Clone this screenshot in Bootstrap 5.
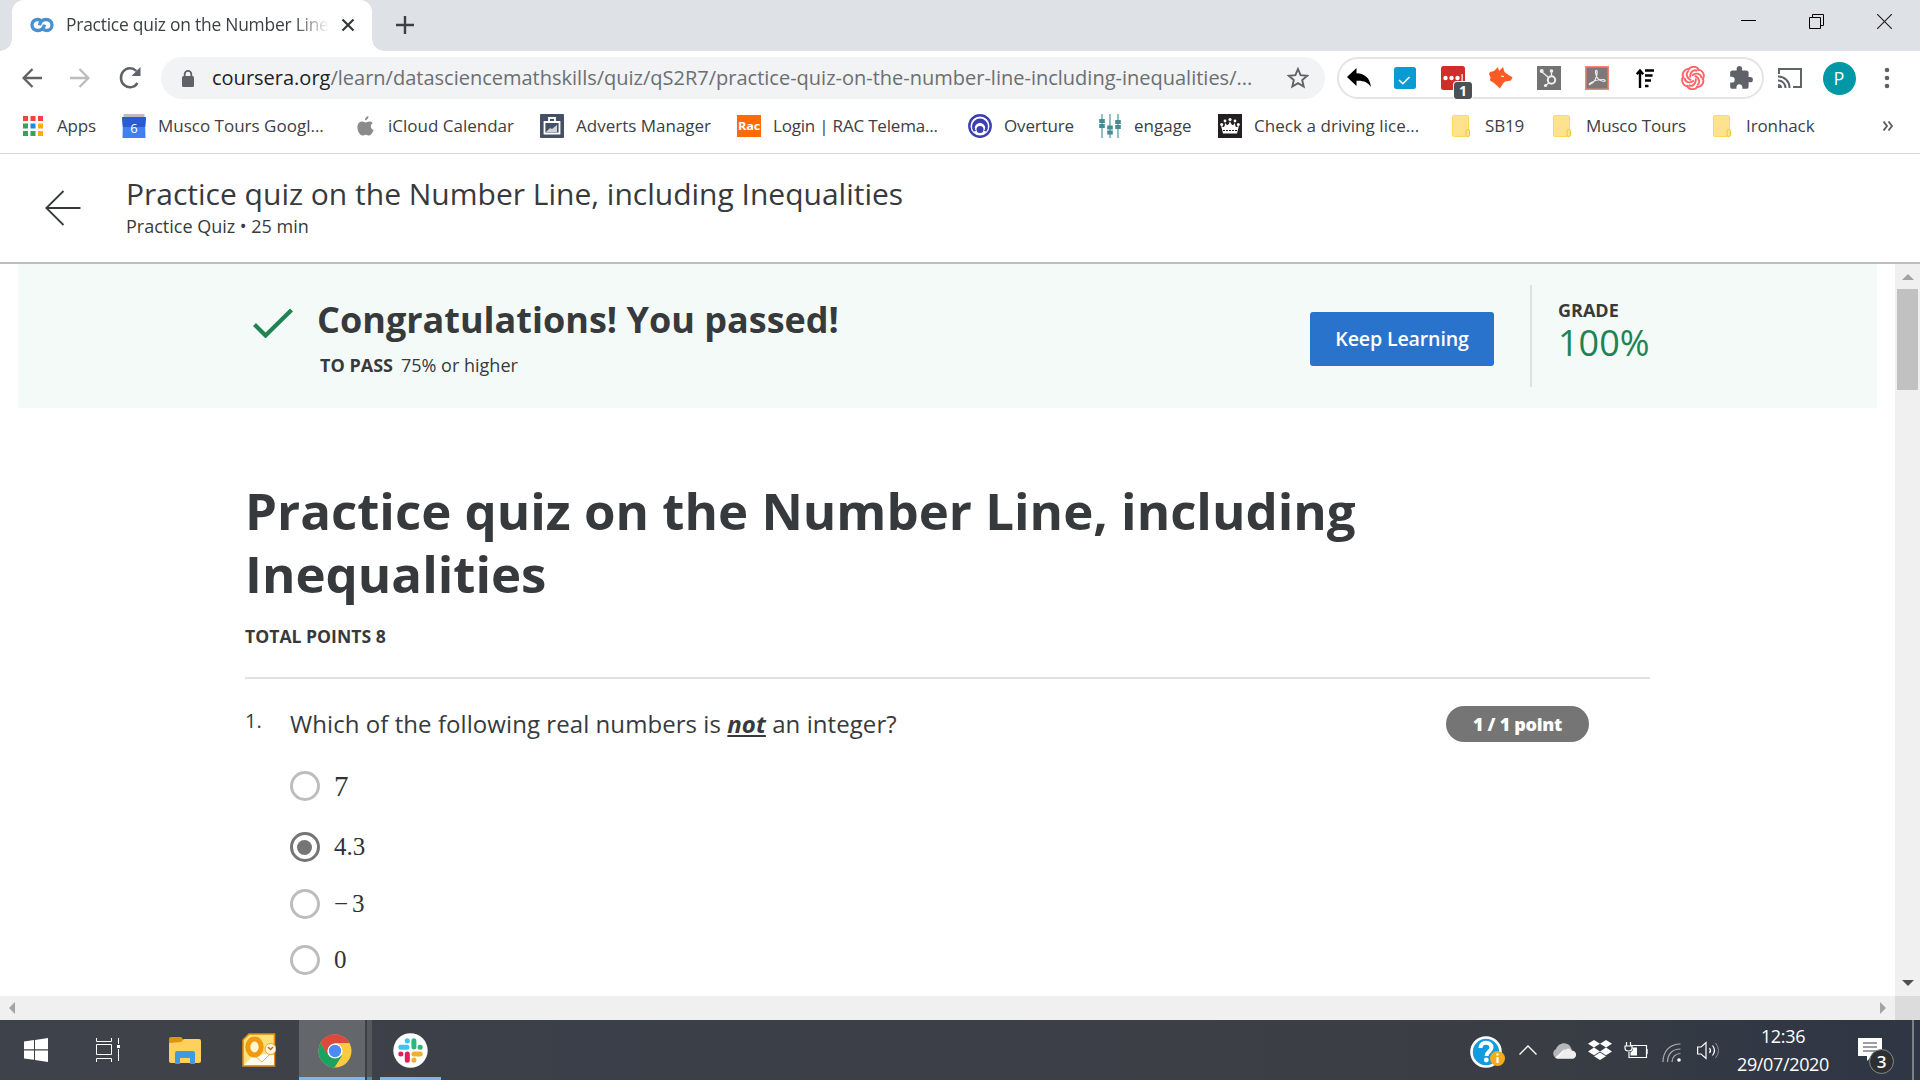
<!DOCTYPE html>
<html lang="en">
<head>
<meta charset="utf-8">
<title>Practice quiz on the Number Line</title>
<link href="https://cdn.jsdelivr.net/npm/bootstrap@5.3.0/dist/css/bootstrap.min.css" rel="stylesheet">
<style>
body{width:1920px;height:1080px;overflow:hidden;font-family:"Open Sans","Noto Sans",sans-serif;color:#373a3c;background:#fff}
svg{display:block;flex:none}
.ic{flex:none;display:flex;align-items:center;justify-content:center}
/* browser chrome */
.tabstrip{height:51px;background:#dee1e6}
.tabitem{width:360px;height:51px;margin-left:12px;background:#fff;border-radius:12px 12px 0 0;padding:0 0 2px 18px;position:relative}
.tabitem::before,.tabitem::after{content:"";position:absolute;bottom:0;width:12px;height:12px}
.tabitem::before{left:-12px;background:radial-gradient(circle at 0 0,transparent 11.5px,#fff 12px)}
.tabitem::after{right:-12px;background:radial-gradient(circle at 100% 0,transparent 11.5px,#fff 12px)}
.tabtitle{width:263px;margin:0 4px 0 12px;font-size:17.4px;letter-spacing:-.22px;color:#3c4043;-webkit-mask-image:linear-gradient(90deg,#000 87%,transparent 100%)}
.newtab{width:66px;height:50px}
.winctl{margin-right:2px}
.winctl .ic{width:68px;height:42px}
.toolbar{height:54px}
.omni{width:1164px;height:42px;margin:0 0 0 9px;border-radius:21px;background:#f1f3f4;padding-left:21px}
.url{font-size:20px;color:#6b6f73;margin-left:18px;width:1075px}
.url b{font-weight:400;color:#202124}
.exts{width:427px;height:42px;margin:0 0 0 12px;border:2px solid #e2e4e6;border-radius:21px}
.exts .ic{width:48px}
.exts .ic:first-child{width:40px;margin-right:2px}
.navbtn{width:48px;height:54px}
.count{left:25px;top:23px;width:18px;height:17px;background:#4d5154;border-radius:3px;font-size:14px;line-height:17px;box-shadow:0 0 0 1px #fff}
.avatar{width:33px;height:33px;background:#0097a7;color:#fff;font-size:18px}
.bookbar{height:49px;border-bottom:1px solid #d6d8da;font-size:17px;color:#3c4043}
.bm{flex:none;height:42px;display:flex;align-items:center}
.bm .ic{width:24px;margin-right:12px}
.b0{width:101px;margin-left:21px;letter-spacing:-.2px}.b1{width:231px}.b2{width:187px}.b3{width:197px}.b4{width:231px;letter-spacing:-.2px}.b5{width:130px;letter-spacing:-.15px}.b6{width:120px}.b7{width:231px;letter-spacing:.05px}.b8{width:101px;letter-spacing:-.15px}.b9{width:160px;letter-spacing:-.15px}.b10{width:161px;letter-spacing:-.1px}
.b2 .ic{margin-right:11px}
/* quiz page */
.pagehead{height:110px;border-bottom:2px solid #bdbdbd;padding:20px 0 0 44px}
.pagehead .titles{margin-left:44px}
.ttl{font-size:30px;line-height:40px}
.sub{font-size:18px;line-height:24px}
.view{height:732px}
.pane{width:1895px}
.banner{width:1859px;height:144px;margin-left:18px;background:#f4faf8;padding-left:235px}
.tick{margin-top:44px}
.result{width:1017px;padding:32px 0 0 24px}
.passline{margin:9px 0 0 3px}
.congrats{font-size:36px;line-height:48px;font-weight:700}
.gradebox{height:102px;border-left:2px solid #e1e1e1;padding:13px 0 0 26px;margin:21px 0 0 36px}
.gradeval{font-size:36px;line-height:42px;color:#1f8354}
.keep{width:184px;height:54px;background:#2a73cc;color:#fff;border:0;border-radius:3px;font-size:19.6px;font-weight:600;letter-spacing:-.15px;margin-top:48px;padding:0}
.keep:hover{background:#2a73cc;color:#fff}
.quiz{width:1405px;margin:71px 0 0 245px}
.quiz h1{font-size:51px;line-height:63px;font-weight:700;margin:0}
.total{font-size:17.6px;line-height:24px;font-weight:700;margin-top:19px}
.rule{height:2px;background:#e1e1e1;margin-top:29px}
.qrow{margin-top:29px}
.qnum{width:45px;font-size:20px;line-height:26px}
.qtext{font-size:24px;line-height:32px;letter-spacing:.065px}
.points{width:143px;height:36px;background:#757575;color:#fff;border-radius:18px;font-size:18px;line-height:37px;font-weight:800;letter-spacing:-.3px;margin:-2px 61px 0 auto}
.answers{margin:29px 0 0 44.500px}
.ans{height:30px;font-family:"Liberation Serif",serif;font-size:25px;line-height:29px;color:#2f3235;gap:14.500px}
.ans.first{font-size:29px;line-height:30px}
.minus{letter-spacing:4px}
.ring{width:30px;height:30px;border:3px solid #bdbdbd;border-radius:50%}
.ring.on{border-color:#757575}
.ring.on::after{content:"";width:15px;height:15px;border-radius:50%;background:#757575}
.vbar{width:25px;background:#f0f0f0}
.thumb{width:21px;height:101px;background:#c1c1c1;margin:9px auto 0}
.hbar{height:24px;background:#f0f0f0}
.corner{width:25px;height:24px;background:#dcdcdc;margin-left:9px}
.taskbar{height:60px;background:linear-gradient(90deg,#3e424b 0,#3f4247 12%,#3b3f49 30%,#3c3f46 60%,#3a3e44 80%,#323844 90%,#2f3644 100%)}
.slot72{width:72px}.slot82{width:82px}.slot66{width:66px}
.chromeslot{width:66px;background:#63676b;border-bottom:3px solid #76b9ed;padding-left:5px;margin-left:7px}
.slackslot{width:61px;margin-left:8px;border-bottom:3px solid #76b9ed}
.stack1{width:2px;background:#3c3f43}.stack2{width:5px;background:#55595d;border-bottom:3px solid #5b87ab}
.tray .ic{width:36px;height:60px}
.tray .help{width:48px;padding-left:2px}
.tray .notif{width:72px}
.clock{width:114px;font-size:18px;line-height:28px;color:#fff;letter-spacing:-.35px;padding-top:2px}
</style>
</head>
<body>
<div class="tabstrip d-flex">
  <div class="tabitem d-flex align-items-center">
    <svg width="24" height="16" viewBox="0 0 24 16"><path d="M9.500 8.300C10.300 4.500 12.500 2.500 16 2.500c3.600 0 6 2.300 6 5.500s-2.400 5.500-5.600 5.500c-2 0-3.400-.9-4.300-2.300" fill="none" stroke="#4a90cf" stroke-width="3.300"/><path d="M14.500 7.700C13.700 11.500 11.500 13.500 8 13.500c-3.600 0-6-2.300-6-5.500s2.400-5.500 5.600-5.500c1.300 0 2.300.4 3.200 1" fill="none" stroke="#4a90cf" stroke-width="3.300"/></svg>
    <div class="tabtitle text-nowrap overflow-hidden">Practice quiz on the Number Line,</div>
    <svg class="ms-2" width="14" height="14" viewBox="0 0 14 14"><path d="M1.500 1.500l11 11M12.500 1.500l-11 11" stroke="#35383b" stroke-width="2.200"/></svg>
  </div>
  <div class="ic newtab"><svg width="18" height="18" viewBox="0 0 18 18"><path d="M9 0v18M0 9h18" stroke="#3c4043" stroke-width="2.400"/></svg></div>
  <div class="winctl d-flex ms-auto">
    <div class="ic"><svg width="15" height="15" viewBox="0 0 15 15"><path d="M0 6.500h15" stroke="#000"/></svg></div>
    <div class="ic"><svg width="15" height="15" viewBox="0 0 15 15"><path d="M.5 3.500h11v11h-11zM3.500 3.500v-3h11v11h-3" fill="none" stroke="#000"/></svg></div>
    <div class="ic"><svg width="15" height="15" viewBox="0 0 15 15"><path d="M0 0l15 15M15 0L0 15" stroke="#222" stroke-width="1.200"/></svg></div>
  </div>
</div>
<div class="toolbar d-flex align-items-center">
  <div class="navbtn ic ms-2"><svg width="20" height="20" viewBox="0 0 20 20"><path d="M20 10H2M10.500 1L1.600 10l8.900 9" fill="none" stroke="#5f6368" stroke-width="2.400"/></svg></div>
  <div class="navbtn ic"><svg width="20" height="20" viewBox="0 0 20 20"><path d="M0 10h18M9.500 1l8.900 9-8.900 9" fill="none" stroke="#bbbdbf" stroke-width="2.400"/></svg></div>
  <div class="navbtn ic ps-1 me-0"><svg width="22" height="24" viewBox="0 0 22 24"><path d="M18.500 17A9 9.500 0 1 1 17.300 5" fill="none" stroke="#5f6368" stroke-width="2.500"/><path d="M21.500 1v9h-9z" fill="#5f6368"/></svg></div>
  <div class="omni d-flex align-items-center">
    <svg width="12" height="17" viewBox="0 0 12 17"><rect y="6" width="12" height="11" rx="1.500" fill="#5f6368"/><path d="M2.700 7V4.200a3.300 3.300 0 0 1 6.600 0V7" fill="none" stroke="#5f6368" stroke-width="1.800"/></svg>
    <div class="url text-nowrap"><b>coursera.org</b>/learn/datasciencemathskills/quiz/qS2R7/practice-quiz-on-the-number-line-including-inequalities/...</div>
    <svg width="22" height="22" viewBox="0 0 22 22"><path d="M11 2l2.600 6.100 6.600.6-5 4.400 1.500 6.500L11 16.200l-5.700 3.400 1.500-6.500-5-4.400 6.600-.6z" fill="none" stroke="#5f6368" stroke-width="1.900"/></svg>
  </div>
  <div class="exts d-flex">
    <div class="ic"><svg width="24" height="20" viewBox="0 0 24 20"><path d="M0 9L9.500 0v5.200C18 5.500 23 10 24 19c-3-4.500-7-6.500-14.500-6.200V18z" fill="#000"/></svg></div>
    <div class="ic"><svg width="22" height="22" viewBox="0 0 22 22"><rect width="22" height="22" rx="2.500" fill="#0b9bd3"/><path d="M5 13l3.800 3.800L15.500 10" fill="none" stroke="#fff" stroke-width="1.500"/></svg></div>
    <div class="ic position-relative"><svg width="24" height="24" viewBox="0 0 24 24"><rect width="24" height="24" rx="2.500" fill="#d32d27"/><g fill="#fff"><circle cx="4.500" cy="12" r="2.200"/><circle cx="10.500" cy="12" r="2.200"/><circle cx="16.500" cy="12" r="2.200"/><path d="M20.500 8h1.200v8h-1.200z"/></g></svg><span class="count position-absolute text-white fw-bold text-center">1</span></div>
    <div class="ic"><svg width="24" height="22" viewBox="0 0 24 22"><path d="M1 5l4-1 4-4 1 4 4-4 1.500 5 4 3 4 2.200-1.500 3.300-6 1-2 2-3 5-6-5.500-4-2.500L1.500 10 0 7z" fill="#ff5a24"/><path d="M12 9l3 .5" stroke="#fff"/></svg></div>
    <div class="ic"><svg width="24" height="24" viewBox="0 0 24 24"><rect width="24" height="24" fill="#737373"/><circle cx="14.500" cy="14" r="3.700" fill="none" stroke="#eee" stroke-width="2"/><path d="M14.500 10V6M11.500 11.500L5 6M12 16.500L8.500 20" stroke="#eee" stroke-width="1.300"/><g fill="#eee"><circle cx="14.500" cy="5" r="1.800"/><circle cx="4.700" cy="5" r="2"/><circle cx="8.500" cy="19.500" r="1.600"/></g></svg></div>
    <div class="ic"><svg width="24" height="24" viewBox="0 0 24 24"><rect x=".7" y=".7" width="22.600" height="22.600" fill="#7e7876" stroke="#f58677" stroke-width="1.500"/><path d="M5 18.500c4-1.500 7-6.500 7.200-12 0-3-2-2.800-1.700 0 .5 5 4 9 8.500 9 2 0 1.500-2-1-2-4 0-8.500 1-12.500 3.500-1.500 1-1.500 2-.5 1.500z" fill="none" stroke="#eee" stroke-width="1.200"/></svg></div>
    <div class="ic"><svg width="18" height="19" viewBox="0 0 18 19"><path d="M4 19V3M.8 5.200L4 1.500l3.200 3.700" fill="none" stroke="#000" stroke-width="2.400"/><path d="M9 1.500h9M9 6.500h7.500M9 11.500h6M9 17h3.500" stroke="#000" stroke-width="2.600"/></svg></div>
    <div class="ic"><svg width="24" height="24" viewBox="-12 -12 24 24"><g fill="none" stroke="#ff6469" stroke-width="1.900"><path id="pt" d="M-1-2.500C3-6 8.500-4 8.200 0M-5-8C-2-13 5-11.800 6-7"/><use href="#pt" transform="rotate(60)"/><use href="#pt" transform="rotate(120)"/><use href="#pt" transform="rotate(180)"/><use href="#pt" transform="rotate(240)"/><use href="#pt" transform="rotate(300)"/></g></svg></div>
    <div class="ic"><svg width="26" height="26" viewBox="0 0 24 24"><path fill="#5f6368" d="M20.500 11H19V7c0-1.100-.9-2-2-2h-4V3.500a2.500 2.500 0 0 0-5 0V5H4c-1.100 0-2 .9-2 2v3.800h1.500a2.700 2.700 0 0 1 0 5.400H2V20c0 1.100.9 2 2 2h3.800v-1.500a2.700 2.700 0 0 1 5.400 0V22H17c1.100 0 2-.9 2-2v-4h1.500a2.500 2.500 0 0 0 0-5z"/></svg></div>
  </div>
  <div class="ic" style="width:51px"><svg width="24" height="20" viewBox="0 0 24 20"><path d="M1 6V1h22v18h-8" fill="none" stroke="#5f6368" stroke-width="2"/><path d="M0 8.500A11 11 0 0 1 11.500 20M0 12.500A7.300 7.300 0 0 1 7.500 20" fill="none" stroke="#5f6368" stroke-width="2"/><path d="M0 16a4 4 0 0 1 4 4H0z" fill="#5f6368"/></svg></div>
  <div class="ic" style="width:48px"><span class="avatar rounded-circle d-flex align-items-center justify-content-center">P</span></div>
  <div class="ic" style="width:48px"><svg width="6" height="22" viewBox="0 0 6 22"><g fill="#5f6368"><circle cx="3" cy="3" r="2.300"/><circle cx="3" cy="11" r="2.300"/><circle cx="3" cy="19" r="2.300"/></g></svg></div>
</div>
<div class="bookbar d-flex text-nowrap">
  <div class="bm b0"><div class="ic"><svg width="20" height="20" viewBox="0 0 20 20"><path d="M0 0h5v5H0zM7.500 0h5v5h-5zM15 0h5v5h-5z" fill="#f4433a"/><path d="M0 7.500h5v5H0zM0 15h5v5H0zM7.500 15h5v5h-5z" fill="#34a456"/><path d="M7.500 7.500h5v5h-5z" fill="#1e88e5"/><path d="M15 7.500h5v5h-5zM15 15h5v5h-5z" fill="#fbaf05"/></svg></div>Apps</div>
  <div class="bm b1"><div class="ic"><svg width="24" height="24" viewBox="0 0 24 24"><path d="M1.500 0h21v5h-21z" fill="#bdbdbd"/><path d="M0 3h24l-.8 9 .3 12H.5l.3-12z" fill="#4080f0"/><path d="M0 3h24l-.8 10H.8z" fill="#2a5bd0"/><text x="12" y="18.500" font-size="13" fill="#fff" text-anchor="middle">6</text></svg></div><span>Musco Tours Googl...</span></div>
  <div class="bm b2"><div class="ic"><svg width="17" height="20" viewBox="0 0 17 20"><path d="M11.500 0c.2 2.400-1.700 4.300-3.500 4.300C7.700 2.300 9.500.3 11.500 0zM15.800 7c-3 2-2.300 5.700.8 7-1 2.800-2.700 5.500-4.400 5.500-1.300 0-1.700-.8-3.400-.8-1.600 0-2.200.8-3.400.8C2.800 19.500.4 15 .4 11.300.4 7.600 2.700 5.500 5 5.500c1.500 0 2.600.9 3.700.9 1 0 2.400-1 4-1 1.200 0 2.400.6 3.100 1.600z" fill="#8b8b8b"/></svg></div><span>iCloud Calendar</span></div>
  <div class="bm b3"><div class="ic"><svg width="24" height="24" viewBox="0 0 24 24"><rect width="24" height="24" rx="1" fill="#465064"/><path d="M4.500 8h15v11.500h-15zM9 8V4h6v4" fill="none" stroke="#fff" stroke-width="1.800"/><path d="M6 18l4-4 2 1 5-4v7z" fill="#cfd3da"/></svg></div><span>Adverts Manager</span></div>
  <div class="bm b4"><div class="ic"><svg width="24" height="22" viewBox="0 0 24 22"><rect width="24" height="22" fill="#ff6a08"/><text x="12" y="15" font-size="11" font-weight="700" fill="#fff" text-anchor="middle" textLength="22" lengthAdjust="spacingAndGlyphs">Rac</text></svg></div><span>Login | RAC Telema...</span></div>
  <div class="bm b5"><div class="ic"><svg width="24" height="24" viewBox="0 0 24 24"><circle cx="12" cy="12" r="10.700" fill="#fff" stroke="#3c40b0" stroke-width="2.400"/><path d="M5.700 17.500A8 8 0 1 1 18.300 17.500L16 17a5 5 0 1 0-8 0z" fill="#3c40b0"/><circle cx="12" cy="15.500" r="3.500" fill="#3c40b0"/></svg></div><span>Overture</span></div>
  <div class="bm b6"><div class="ic"><svg width="24" height="24" viewBox="0 0 24 24"><path d="M4 0v24M12 0v24M20 0v24" stroke="#7bb0b3" stroke-width="1.600"/><g fill="#438d92"><rect x="1.200" y="5" width="5.600" height="4"/><rect x="1.200" y="10" width="5.600" height="4"/><rect x="9.200" y="11.500" width="5.600" height="4"/><rect x="9.200" y="16.500" width="5.600" height="4"/><rect x="17.200" y="6" width="5.600" height="4"/><rect x="17.200" y="11" width="5.600" height="4"/></g></svg></div><span>engage</span></div>
  <div class="bm b7"><div class="ic"><svg width="24" height="24" viewBox="0 0 24 24"><rect width="24" height="24" fill="#231f20"/><g fill="#fff"><circle cx="12" cy="5.500" r="1.600"/><circle cx="7" cy="7" r="1.400"/><circle cx="17" cy="7" r="1.400"/><circle cx="3.700" cy="10.500" r="1.500"/><circle cx="20.300" cy="10.500" r="1.500"/><path d="M5 19.500L3 11.500c2.500 2.500 4 2 4-3 1.500 3.500 3.500 3.500 5-1.500 1.500 5 3.500 5 5 1.500 0 5 1.500 5.500 4 3l-2 8z"/></g><path d="M5 16.500h14" stroke="#231f20" stroke-dasharray="2 1"/></svg></div><span>Check a driving lice...</span></div>
  <div class="bm b8"><div class="ic"><svg width="18" height="22" viewBox="0 0 18 22"><rect x=".5" y=".5" width="16" height="21" rx="1" fill="#ffe38c" stroke="#ffd95c"/><rect x="14" y="14.500" width="3.500" height="7" rx="1.500" fill="#ffe38c" stroke="#eec63f"/></svg></div><span>SB19</span></div>
  <div class="bm b9"><div class="ic"><svg width="18" height="22" viewBox="0 0 18 22"><rect x=".5" y=".5" width="16" height="21" rx="1" fill="#ffe38c" stroke="#ffd95c"/><rect x="14" y="14.500" width="3.500" height="7" rx="1.500" fill="#ffe38c" stroke="#eec63f"/></svg></div><span>Musco Tours</span></div>
  <div class="bm b10"><div class="ic"><svg width="18" height="22" viewBox="0 0 18 22"><rect x=".5" y=".5" width="16" height="21" rx="1" fill="#ffe38c" stroke="#ffd95c"/><rect x="14" y="14.500" width="3.500" height="7" rx="1.500" fill="#ffe38c" stroke="#eec63f"/></svg></div><span>Ironhack</span></div>
  <div class="bm ps-2"><svg class="ms-1" width="10" height="10" viewBox="0 0 10 10"><path d="M.5.5L4 5 .5 9.500M5.500.5L9 5 5.500 9.500" fill="none" stroke="#5f6368" stroke-width="1.900"/></svg></div>
</div>
<header class="pagehead d-flex">
  <svg width="38" height="36" viewBox="0 0 38 36" class="mt-3"><path d="M36.500 18H2.500M19.500 1L2.300 18l17.200 17" fill="none" stroke="#373a3c" stroke-width="1.800"/></svg>
  <div class="titles"><div class="ttl">Practice quiz on the Number Line, including Inequalities</div><div class="sub">Practice Quiz • 25 min</div></div>
</header>
<div class="view d-flex">
  <main class="pane">
    <section class="banner d-flex">
      <svg class="tick" width="40" height="30" viewBox="0 0 40 30"><path d="M1.500 16.500l11 11L38.500 2" fill="none" stroke="#1f8354" stroke-width="4.200"/></svg>
      <div class="result">
        <div class="congrats">Congratulations! You passed!</div>
        <div class="sub passline"><b class="me-2">TO PASS</b><span>75% or higher</span></div>
      </div>
      <button class="btn keep">Keep Learning</button>
      <div class="gradebox"><div class="sub fw-bold">GRADE</div><div class="gradeval">100%</div></div>
    </section>
    <section class="quiz">
      <h1>Practice quiz on the Number Line, including<br>Inequalities</h1>
      <div class="total">TOTAL POINTS 8</div>
      <div class="rule"></div>
      <div class="qrow d-flex">
        <div class="qnum">1.</div>
        <div class="qtext">Which of the following real numbers is <b class="fst-italic text-decoration-underline">not</b> an integer?</div>
        <div class="points text-center">1 / 1 point</div>
      </div>
      <div class="answers">
        <div class="ans first d-flex" style="margin-bottom:31px"><span class="ring"></span><span>7</span></div>
        <div class="ans d-flex" style="margin-bottom:27px"><span class="ring on d-flex align-items-center justify-content-center"></span><span>4.3</span></div>
        <div class="ans d-flex" style="margin-bottom:26px"><span class="ring"></span><span><span class="minus">−</span>3</span></div>
        <div class="ans d-flex"><span class="ring"></span><span>0</span></div>
      </div>
    </section>
  </main>
  <div class="vbar d-flex flex-column">
    <svg class="mx-auto" style="margin-top:10px" width="12" height="6" viewBox="0 0 12 6"><path d="M6 0l6 6H0z" fill="#a3a3a3"/></svg>
    <div class="thumb"></div>
    <svg class="mx-auto mt-auto" style="margin-bottom:10px" width="12" height="6" viewBox="0 0 12 6"><path d="M0 0h12L6 6z" fill="#505050"/></svg>
  </div>
</div>
<div class="hbar d-flex align-items-center">
  <svg style="margin-left:9px" width="6" height="12" viewBox="0 0 6 12"><path d="M6 0v12L0 6z" fill="#a3a3a3"/></svg>
  <svg class="ms-auto" width="6" height="12" viewBox="0 0 6 12"><path d="M0 0v12l6-6z" fill="#a3a3a3"/></svg>
  <div class="corner"></div>
</div>
<footer class="taskbar d-flex">
  <div class="ic slot72"><svg width="24" height="24" viewBox="0 0 24 24"><path d="M0 3.500l10-1.400v9.200H0zM11 2l13-2v11.300H11zM0 12.500h10v9.300L0 20.400zM11 12.500h13V24l-13-2z" fill="#fff"/></svg></div>
  <div class="ic slot72"><svg width="24" height="24" viewBox="0 0 24 24"><path d="M.5 0v3.500h15V0M.5 24v-3.500h15V24M.5 6.500h15v10H.5zM22.500 0v6M22.500 11v12" fill="none" stroke="#fff"/><path d="M21 7h3v3h-3z" fill="#fff"/></svg></div>
  <div class="ic slot82"><svg width="32" height="27" viewBox="0 0 32 27"><path d="M0 2q0-2 2-2h10l3 3h14v4H0z" fill="#dd9608"/><path d="M0 6l12-1 3-3h15q2 0 2 2v20q0 2-2 2H2q-2 0-2-2z" fill="#ffd15c"/><path d="M6 27V16q0-2 2-2h16q2 0 2 2v11h-5v-6h-10v6z" fill="#3f9bdd"/></svg></div>
  <div class="ic slot66"><svg width="34" height="34" viewBox="0 0 34 34"><path d="M1 7l6-6h25.500v32H1z" fill="#fde27a" stroke="#e08c12" stroke-width="1.600"/><path d="M2 32l8-8 22-2v10z" fill="#fffbea"/><path d="M12 22l8 7 8-8" fill="#fff" stroke="#e9b445"/><ellipse cx="12.500" cy="14" rx="6.700" ry="8" fill="#fff5d0" stroke="#f09a10" stroke-width="5"/><circle cx="28.500" cy="16" r="5.500" fill="#fff7df" stroke="#e8a13d"/><path d="M26 14l2.500 2.500L31 14" fill="none" stroke="#c76915" stroke-width="1.500"/></svg></div>
  <div class="ic chromeslot"><svg class="mt-1" width="34" height="34" viewBox="-17 -17 34 34"><circle r="16.500" fill="#fbca3e"/><path d="M-14.500-8A16.500 16.500 0 0 1 14.500-8H0L-7.500 4z" fill="#db4a3e"/><path d="M-14.500-8A16.500 16.500 0 0 0-.5 16.500L7 4.500-7 4z" fill="#1ba261"/><circle r="7.600" fill="#fff"/><circle r="6.200" fill="#4c8bf5"/></svg></div>
  <div class="stack1"></div><div class="stack2"></div>
  <div class="ic slackslot"><svg class="mt-1" width="35" height="35" viewBox="-17.500 -17.500 35 35"><circle r="17.200" fill="#fff"/><g stroke-width="5" stroke-linecap="round"><path d="M-9.700-3.200h6.200M-3.200-9.700v.2" stroke="#36c5f0"/><path d="M3.400-9.700v6.200M9.700-3.200h-.2" stroke="#2eb67d"/><path d="M3.500 3.500h6.200M3.400 9.700v-.1" stroke="#ecb22e"/><path d="M-3.200 3.500v6.200M-9.700 3.500h.1" stroke="#e01e5a"/></g></svg></div>
  <div class="tray d-flex ms-auto">
    <div class="ic help"><svg class="mt-1" width="38" height="36" viewBox="0 0 38 36"><circle cx="18" cy="18" r="14.500" fill="#139bdd" stroke="#fff" stroke-width="2.600"/><path d="M12.500 14c0-7 11-7 11-.5 0 4-5 4-5 8.500" fill="none" stroke="#fff" stroke-width="4"/><circle cx="18.300" cy="26" r="2.400" fill="#fff"/><circle cx="29.500" cy="24.500" r="7.500" fill="#f5ac1c"/><path d="M29.500 23v6M29.500 19.500v2" stroke="#fff" stroke-width="2.200"/></svg></div>
    <div class="ic"><svg width="18" height="10" viewBox="0 0 18 10"><path d="M.5 9.500L9 1l8.500 8.500" fill="none" stroke="#fff" stroke-width="1.400"/></svg></div>
    <div class="ic"><svg width="24" height="17" viewBox="0 0 24 17"><path d="M4 16a5 5 0 0 1 0-9C6 1 14-1 18 4l2 4-8 8z" fill="#b5b8bb"/><path d="M3 16l9-8.500L22.500 15l-1 1.500H5z" fill="#fff"/><path d="M12 8.500q5-4 7.500 0c6 0 6 8 1 8H5z" fill="#ededed"/></svg></div>
    <div class="ic"><svg width="24" height="20" viewBox="0 0 24 20"><path d="M6 0l6 3.800-6 3.800L0 3.800zM18 0l6 3.800-6 3.800-6-3.800zM6 7.600l6 3.800-6 3.800-6-3.800zM18 7.600l6 3.800-6 3.800-6-3.800zM12 12.500l6 3.800-6 3.700-6-3.700z" fill="#fff"/></svg></div>
    <div class="ic"><svg width="24" height="18" viewBox="0 0 24 18"><path d="M7 4.500h15.500v12H5V11M24 8v5M2.500 1v4M6.500 1v4M1 5h7v2q0 3-3.500 3T1 7z" fill="none" stroke="#fff" stroke-width="1.200"/><path d="M8 6.500h5v8H6.500v-3L9 9z" fill="#fff"/></svg></div>
    <div class="ic"><svg class="mt-1" width="20" height="19" viewBox="0 0 20 19"><g fill="none" stroke="#aaaeb3" stroke-width="1.200"><path d="M1 19C1 8 8 1 18.500 1M5.500 19c0-8 5-13 13-13M10 19c0-5 3.500-8.500 8.500-8.500"/></g><circle cx="17" cy="17" r="1.800" fill="#fff"/></svg></div>
    <div class="ic"><svg width="23" height="19" viewBox="0 0 23 19"><path d="M.6 6h3.500L9 1.500v16L4 13H.6z" fill="none" stroke="#fff" stroke-width="1.200"/><path d="M12.500 7q2 2.500 0 5M15.500 4.500q4 5 0 10" fill="none" stroke="#fff" stroke-width="1.200"/><path d="M18.500 2q6 7.500 0 15" fill="none" stroke="#8b9099"/></svg></div>
    <div class="clock text-center"><div>12:36</div><div>29/07/2020</div></div>
    <div class="ic notif pt-2"><svg class="mt-1" width="38" height="38" viewBox="0 0 38 38"><path d="M1 1h24v18H15l-5 5v-5H1z" fill="#fff"/><path d="M6 6h14M6 10h14M6 14h14" stroke="#3a3f49" stroke-width="1.200"/><circle cx="24.500" cy="24.500" r="12" fill="#2e2f31" stroke="#85888c"/><text x="24.500" y="30.500" text-anchor="middle" fill="#fff" font-weight="600" font-size="17">3</text></svg></div>
    <div style="width:8px;border-left:2px solid #7c8088"></div>
  </div>
</footer>
<script src="https://cdn.jsdelivr.net/npm/bootstrap@5.3.0/dist/js/bootstrap.bundle.min.js"></script>
</body>
</html>
